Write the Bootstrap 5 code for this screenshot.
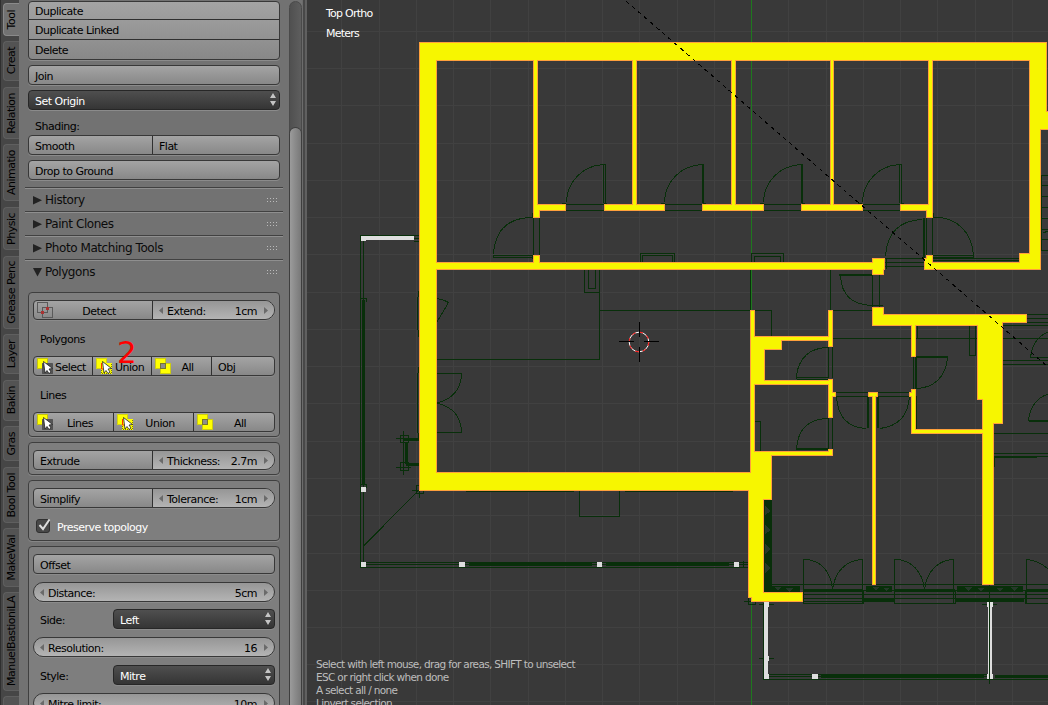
<!DOCTYPE html>
<html lang="en">
<head>
<meta charset="utf-8">
<meta name="viewport" content="width=device-width, initial-scale=1">
<title>Floor plan editor</title>
<link href="https://cdn.jsdelivr.net/npm/bootstrap@5.3.0/dist/css/bootstrap.min.css" rel="stylesheet">
<style>
body{font-family:"DejaVu Sans",sans-serif;font-size:11px;letter-spacing:-.5px;line-height:14px;color:#000;background:#393939}
.app{height:705px;width:1048px}
.tabcol{width:19px;background:#464646;padding:3px 0 0 2px;border-left:1px solid #2f2f2f;flex:none}
.tab{width:17px;border:1px solid #5f5f5f;border-right:0;border-radius:4px 0 0 4px;background:#535353;writing-mode:vertical-rl;flex:none}
.tab span{transform:rotate(180deg);white-space:nowrap;line-height:16px}
.tab.on{background:#727272;border-color:#8a8a8a}
.panel{width:270px;background:#727272;padding:1px 9px 0 9px;flex:none}
.edge{width:5px;background:linear-gradient(90deg,#6c6c6c 0 1px,#484848 1px 3px,#606060 3px);flex:none}
.scroller{width:13px;background:#727272;padding-top:1px;flex:none}
.track{height:760px;border:1px solid #4a4a4a;border-radius:7px;background:linear-gradient(90deg,#505050,#5e5e5e);padding-top:126px}
.thumb{height:640px;border-radius:6px;background:linear-gradient(90deg,#9b9b9b,#787878);box-shadow:0 0 0 1px #3e3e3e}
.ctl{height:20px;border:1px solid #383838;border-radius:4px;background:linear-gradient(#a4a4a4,#888);box-shadow:0 1px 0 #8b8b8b;overflow:hidden;flex:none}
.ctl>div{padding:4px 6px 0;position:relative;white-space:nowrap}
.ctl>div+div{border-left:1px solid #303030}
.stack{height:59px;flex-direction:column}
.stack>div{height:20px;flex:none}
.stack>div:first-child{height:17px;padding-top:3px}
.stack>div+div{border-left:0;border-top:1px solid #303030}
.drop{background:linear-gradient(#4f4f4f,#353535);color:#fff;border-color:#272727}
.drop svg{margin-top:-2px}
.num{background:linear-gradient(#969696,#b4b4b4)}
.num svg{margin-top:2px}
.num svg:last-child{margin-left:7px}
.endnum{border-radius:4px 10px 10px 4px}
.pill{border-radius:10px}
.lab{height:20px;padding:5px 7px 0;flex:none}
.head{height:24px;border-top:1px solid #414141;box-shadow:inset 0 1px 0 #8f8f8f;padding:1px 4px 0 8px;margin:0 -3px 0 -3px;font-size:12px;letter-spacing:-.43px;color:#0b0b0b;flex:none}
.head svg:first-child{margin-right:3px}
.group{border:1px solid #3f3f3f;border-radius:4px;background:#7e7e7e;padding:7px 4px 0;box-shadow:0 1px 0 #868686;flex:none}
.chk{width:14px;height:14px;border:1px solid #303030;border-radius:3px;background:#484848}
.ico{padding:0 3px!important}
.ico span{padding-top:4px}
.view{position:relative;width:741px;overflow:hidden;flex:none}
.hud{position:absolute;color:#fff;letter-spacing:-.75px}
.tips{color:#bdbdbd;line-height:13px;white-space:pre;font-size:10.5px;letter-spacing:-.65px}
.note{position:absolute;left:117px;top:334px;font-size:31px;line-height:36px;color:#f00;letter-spacing:0}
svg{display:block;flex:none}
</style>
<script src="https://cdn.jsdelivr.net/npm/bootstrap@5.3.0/dist/js/bootstrap.bundle.min.js"></script>
</head>
<body class="overflow-hidden">
<svg width="0" height="0" class="position-absolute"><defs>
<g id="i-all" shape-rendering="crispEdges"><path d="M0 0H11V5H16V16H5V11H0z" fill="#ff0"/><path d="M.5 .5H10.500V10.500H.5zM5.500 5.500H15.500V15.500H5.500z" fill="none" stroke="#9a9a20" stroke-opacity=".5"/><path d="M5.500 5.500H10.500V10.500H5.500z" fill="#8d8d8d" stroke="#77772a"/></g>
<g id="cur"><path d="M6.500 3.500L15.500 10.500L12 11L14 14L12 15.500L10 12.500L8 15z" fill="#fff" stroke="#222" stroke-width=".8"/></g>
<g id="i-sel"><path d="M5.500 5.500H15.500V15.500H5.500z" fill="#555" stroke="#333" stroke-dasharray="1 1"/><path d="M0 0H11V5H5V11H0z" fill="#ff0"/><path d="M.5 .5H10.500V5M.5 .5V10.500H5" fill="none" stroke="#85851c" stroke-opacity=".5"/><use href="#cur"/></g>
<g id="i-uni"><path d="M0 0H11V5H16V16H5V11H0z" fill="#ff0"/><path d="M.5 .5H10.500V5M.5 .5V10.500H5" fill="none" stroke="#b4b41c" stroke-opacity=".6"/><path d="M5.500 5v6h4" fill="none" stroke="#f30"/><path d="M15.500 6v9.500H5.500V11" fill="none" stroke="#77770c" stroke-dasharray="1 1"/><use href="#cur"/></g>
<g id="i-det" fill="none" shape-rendering="crispEdges"><path d="M.5 .5H10.500V10.500H.5zM5.500 5.500H15.500V15.500H5.500z" stroke="#5a5a5a"/><path d="M9 5h3v3h-3zM4 9h3v3h-3z" fill="#a33"/></g>
<path id="la" d="M4 0V7L0 3.500z" fill="#6a6a6a"/><path id="ra" d="M0 0V7L4 3.500z" fill="#6a6a6a"/>
<path id="ud" d="M3 0L6 5H0zM3 13L6 8H0z" fill="#c4c4c4"/>
<path id="grip" d="M0 1h1m2 0h1m2 0h1m2 0h1M0 4h1m2 0h1m2 0h1m2 0h1" stroke="#bbb" transform="translate(0,.5)"/>
<path id="walls" d="M420 43H436V490H420zM420 43H1046V60H420zM1030 43H1046V129H1030zM1030 112H1060V129H1030zM1030 112H1040V269H1030zM925 263H1040V269H925zM1020 254H1040V269H1020zM927 256H932V269H927zM925 259H932V269H925zM534 50H537V217H534zM534 205H539V217H534zM633 50H636V210H633zM732 50H735V210H732zM831 50H833V210H831zM929 50H932V217H929zM927 205H932V217H927zM534 205H565V210H534zM605 205H664V210H605zM703 205H763V210H703zM802 205H862V210H802zM901 205H932V210H901zM430 263H880V269H430zM873 259H884V269H873zM873 259H883V274H873zM534 256H539V265H534zM420 473H760V490H420zM751 311H754V480H751zM751 337H831V340H751zM751 337H781V349H751zM751 337H764V384H751zM751 381H830V384H751zM829 311H832V346H829zM829 380H832V417H829zM829 393H835V396H829zM751 452H832V455H751zM829 450H832V455H829zM751 452H771V499H751zM749 475H763V597H749zM752 593H802V601H752zM752 580H763V601H752zM873 308H883V325H873zM873 315H1002V325H873zM990 315H1026V322H990zM978 315H1002V399H978zM983 315H1002V423H983zM983 400H993V584H983zM912 320H915V350H912zM912 349H915V356H912zM912 390H915V433H912zM912 430H985V433H912zM910 393H915V396H910zM873 393H875V584H873zM869 393H877V396H869z"/>
</defs></svg>
<div class="app d-flex position-relative">
<nav class="tabcol d-flex flex-column overflow-hidden">
<div class="tab on d-flex align-items-center justify-content-center" style="height:33px;margin-bottom:5px"><span>Tool</span></div>
<div class="tab d-flex align-items-center justify-content-center" style="height:40px;margin-bottom:6px"><span>Creat</span></div>
<div class="tab d-flex align-items-center justify-content-center" style="height:52px;margin-bottom:5px"><span>Relation</span></div>
<div class="tab d-flex align-items-center justify-content-center" style="height:57px;margin-bottom:6px"><span>Animatio</span></div>
<div class="tab d-flex align-items-center justify-content-center" style="height:43px;margin-bottom:6px"><span>Physic</span></div>
<div class="tab d-flex align-items-center justify-content-center" style="height:73px;margin-bottom:5px"><span>Grease Penc</span></div>
<div class="tab d-flex align-items-center justify-content-center" style="height:40px;margin-bottom:6px"><span>Layer</span></div>
<div class="tab d-flex align-items-center justify-content-center" style="height:41px;margin-bottom:5px"><span>Bakin</span></div>
<div class="tab d-flex align-items-center justify-content-center" style="height:35px;margin-bottom:6px"><span>Gras</span></div>
<div class="tab d-flex align-items-center justify-content-center" style="height:56px;margin-bottom:5px"><span>Bool Tool</span></div>
<div class="tab d-flex align-items-center justify-content-center" style="height:59px;margin-bottom:5px"><span>MakeWal</span></div>
<div class="tab d-flex align-items-center justify-content-center" style="height:99px;margin-bottom:5px"><span>ManuelBastioniLA</span></div>
<div class="tab" style="height:40px"></div>
</nav>
<main class="panel d-flex flex-column overflow-hidden">
<div class="ctl stack d-flex"><div>Duplicate</div><div>Duplicate Linked</div><div>Delete</div></div>
<div class="ctl" style="margin-top:5px"><div>Join</div></div>
<div class="ctl drop" style="margin-top:5px"><div class="d-flex justify-content-between" style="padding-right:3px"><span>Set Origin</span><svg width="6" height="13"><use href="#ud"/></svg></div></div>
<div class="lab" style="margin-top:5px">Shading:</div>
<div class="ctl d-flex"><div style="width:123px">Smooth</div><div>Flat</div></div>
<div class="ctl" style="margin-top:5px"><div>Drop to Ground</div></div>
<div class="head d-flex align-items-center" style="margin-top:7px"><svg width="9" height="10"><path d="M0 1V9.500L9 5.200z" fill="#222"/></svg><span class="flex-grow-1">History</span><svg width="12" height="6"><use href="#grip"/></svg></div>
<div class="head d-flex align-items-center"><svg width="9" height="10"><path d="M0 1V9.500L9 5.200z" fill="#222"/></svg><span class="flex-grow-1">Paint Clones</span><svg width="12" height="6"><use href="#grip"/></svg></div>
<div class="head d-flex align-items-center"><svg width="9" height="10"><path d="M0 1V9.500L9 5.200z" fill="#222"/></svg><span class="flex-grow-1">Photo Matching Tools</span><svg width="12" height="6"><use href="#grip"/></svg></div>
<div class="head d-flex align-items-center"><svg width="9" height="10"><path d="M0 1H9L4.500 9.500z" fill="#222"/></svg><span class="flex-grow-1">Polygons</span><svg width="12" height="6"><use href="#grip"/></svg></div>
<section class="group" style="height:145px;margin-top:9px">
<div class="ctl endnum d-flex"><div class="ico d-flex" style="width:118px"><svg width="16" height="18"><use href="#i-det" y="1"/></svg><span class="flex-grow-1 text-center pe-1">Detect</span></div><div class="num flex-grow-1 d-flex"><svg width="8" height="8"><use href="#la"/></svg><span class="flex-grow-1">Extend:</span><span>1cm</span><svg width="4" height="8"><use href="#ra"/></svg></div></div>
<div class="lab" style="margin-top:8px">Polygons</div>
<div class="ctl d-flex" style="margin-top:8px"><div class="ico d-flex" style="width:58px"><svg width="17" height="18"><use href="#i-sel" y="1"/></svg><span style="padding-left:1px">Select</span></div><div class="ico d-flex" style="width:59px"><svg width="17" height="18"><use href="#i-uni" y="1"/></svg><span style="padding-left:2px">Union</span></div><div class="ico d-flex" style="width:60px"><svg width="16" height="18"><use href="#i-all" y="1"/></svg><span class="flex-grow-1 text-center pe-1">All</span></div><div>Obj</div></div>
<div class="lab" style="margin-top:8px">Lines</div>
<div class="ctl d-flex" style="margin-top:8px"><div class="ico d-flex" style="width:79px"><svg width="17" height="18"><use href="#i-sel" y="1"/></svg><span class="flex-grow-1 text-center pe-1">Lines</span></div><div class="ico d-flex" style="width:80px"><svg width="17" height="18"><use href="#i-uni" y="1"/></svg><span class="flex-grow-1 text-center pe-1">Union</span></div><div class="ico d-flex flex-grow-1"><svg width="16" height="18"><use href="#i-all" y="1"/></svg><span class="flex-grow-1 text-center pe-1">All</span></div></div>
</section>
<section class="group" style="height:33px;margin-top:5px">
<div class="ctl endnum d-flex"><div style="width:118px">Extrude</div><div class="num flex-grow-1 d-flex"><svg width="8" height="8"><use href="#la"/></svg><span class="flex-grow-1">Thickness:</span><span>2.7m</span><svg width="4" height="8"><use href="#ra"/></svg></div></div>
</section>
<section class="group" style="height:61px;margin-top:5px">
<div class="ctl endnum d-flex"><div style="width:118px">Simplify</div><div class="num flex-grow-1 d-flex"><svg width="8" height="8"><use href="#la"/></svg><span class="flex-grow-1">Tolerance:</span><span>1cm</span><svg width="4" height="8"><use href="#ra"/></svg></div></div>
<div class="d-flex text-white" style="margin:11px 0 0 3px"><span class="chk"><svg width="14" height="12" overflow="visible"><path d="M2.500 5L6 9L12.500 -.5" fill="none" stroke="#ddd" stroke-width="2"/></svg></span><span style="margin:2px 0 0 7px">Preserve topology</span></div>
</section>
<section class="group" style="height:220px;margin-top:5px">
<div class="ctl"><div>Offset</div></div>
<div class="ctl num pill" style="margin-top:8px"><div class="d-flex"><svg width="8" height="8"><use href="#la"/></svg><span class="flex-grow-1">Distance:</span><span>5cm</span><svg width="4" height="8"><use href="#ra"/></svg></div></div>
<div class="d-flex" style="margin-top:7px"><div class="lab" style="width:80px">Side:</div><div class="ctl drop flex-grow-1"><div class="d-flex justify-content-between" style="padding-right:3px"><span>Left</span><svg width="6" height="13"><use href="#ud"/></svg></div></div></div>
<div class="ctl num pill" style="margin-top:8px"><div class="d-flex"><svg width="8" height="8"><use href="#la"/></svg><span class="flex-grow-1">Resolution:</span><span>16</span><svg width="4" height="8"><use href="#ra"/></svg></div></div>
<div class="d-flex" style="margin-top:8px"><div class="lab" style="width:80px">Style:</div><div class="ctl drop flex-grow-1"><div class="d-flex justify-content-between" style="padding-right:3px"><span>Mitre</span><svg width="6" height="13"><use href="#ud"/></svg></div></div></div>
<div class="ctl num pill" style="margin-top:8px"><div class="d-flex"><svg width="8" height="8"><use href="#la"/></svg><span class="flex-grow-1">Mitre limit:</span><span>10m</span><svg width="4" height="8"><use href="#ra"/></svg></div></div>
</section>
</main>
<div class="scroller overflow-hidden"><div class="track"><div class="thumb"></div></div></div>
<div class="edge"></div>
<div class="view">
<svg width="741" height="705" viewBox="307 0 741 705" shape-rendering="crispEdges" fill="none">
<!-- grid -->
<path stroke="#414141" d="M341.500 0V705M379.500 0V705M416.500 0V705M453.500 0V705M490.500 0V705M528.500 0V705M565.500 0V705M602.500 0V705M639.500 0V705M677.500 0V705M714.500 0V705M788.500 0V705M826.500 0V705M863.500 0V705M900.500 0V705M937.500 0V705M975.500 0V705M1012.500 0V705M307 31.500H1048M307 68.500H1048M307 105.500H1048M307 143.500H1048M307 180.500H1048M307 217.500H1048M307 254.500H1048M307 292.500H1048M307 329.500H1048M307 366.500H1048M307 403.500H1048M307 441.500H1048M307 478.500H1048M307 515.500H1048M307 553.500H1048M307 590.500H1048M307 627.500H1048M307 664.500H1048M307 701.500H1048"/>
<path d="M751.500 0V705" stroke="#1e781e"/>
<g stroke="#082f0a">
<!-- terrace on the left -->
<path d="M419 235.500H360.500V567.500H749M363.500 240V562M366 562.500H749M366 564.500H749M414 238.500H419M414 241.500H419M363.500 546L418 491"/>
<path d="M363.500 300V484" stroke-width="3"/><path d="M469 564.500H592M606 564.500H729" stroke-width="3"/><path d="M361 298.500h5v3M361 484.500h5v3M743.500 561v7"/>
<path d="M579.500 491V516.500H619.500V491M466 491.500H574M625 491.500H733"/>
<!-- west doors and stair marks -->
<path d="M418.500 291V297M417.500 297V330M418.500 330V337M418.500 367V373M417.500 373V433M418.500 433V438M437 298.500Q443 299 448.500 302.500L437 322M437 359.500H599.500V270M437 373.500H461.500Q461 397 437 403Q461 409 461.500 432.500H437"/>
<path d="M403.500 431V475M396 438.500H411M396 467.500H411M400.500 435.500h8v7h-8zM400.500 462.500h8v8h-8zM412 490.500h10M419.500 486v12M416.500 485.500h7v8h-7z"/><path d="M404 439.500H419M406 442V464M406 464.500H419" stroke-width="3"/>
<!-- fixtures -->
<path d="M584.500 270V292.500H599.500M588.500 270V288.500H595.500V270M640.500 262V253.500H674.500V262M642.500 262V255.500H672.500V262M751.500 262V253.500H783.500V262M754.500 262V256.500H780.500V262M599 310.500H751M750.500 270V310M754 310.500H771.500V336M830.500 270V310M833 310.500H872M833 338.500H978M754 421.500H760.500V452"/>
<!-- upper room doors -->
<path d="M566 204.500H604M566 210.500H604M603.500 203V164.500H605.500V203M562 203.500H566M604 203.500H607M566.500 202A39 38 0 0 1 603 164.500"/>
<path d="M665 204.500H703M665 210.500H703M702.500 164V203M703.500 164V203M661 203.500H665M703 203.500H706M664.500 202A39 38 0 0 1 702 164.500M764 204.500H802M764 210.500H802M801.500 164V203M802.500 164V203M760 203.500H764M802 203.500H805M763.500 202A39 38 0 0 1 801 164.500M863 204.500H900M863 210.500H900M899.500 203V164.500H901.500V203M858 203.500H862M901 203.500H904M862.500 202A39 38 0 0 1 899 164.500"/>
<path d="M533.500 218V255M539.500 218V255M532.500 213V218M532 257.500H493.500V255.500H532V259M493.500 254Q496 218 532 217.500"/>
<path d="M926.500 218V255M932.500 218V255M933 217.500C956 216 972 232 973.500 255.500H933M933 257.500H973.500V254M885.500 256Q888 221 922 219.500M923.500 218V258M924.500 218V258M885 258.500H924M885 262.500H924M885 266.500H924M886.500 258V269M933 258.500H1019M933 260.500H1019M933.500 213V218"/>
<!-- hall doors -->
<path d="M839 274.500H872M839 275.500H872M840.500 276Q842 304 871 305.500M872.500 275V307M879.500 275V307M870 305.500H883"/>
<path d="M828.500 347V378M832.500 347V378M796.500 379V375Q801 348 828 347.500M796 377.500H828M797 379.500H828M828.500 418V449M832.500 418V449M796.500 448Q799 419 828 418.500M796 448.500H828M796 449.500H828"/>
<path d="M836 392.500H868M836 396.500H868M878 392.500H909M878 396.500H909M836.500 396Q838 427 866 428.500M867.500 397V428M868.500 397V428M877.500 397V428M878.500 397V428M880 428.500Q908 425 909.500 396"/>
<path d="M913.500 357V389M915.500 357V389M916.500 357V389M916 356.500H947.500M916 357.500H947.500C946 377 934 388 916 388.500M969.500 326V355.500H976M975.500 326V355M917.500 326V338M916.500 396V430"/>
<!-- right side -->
<path d="M1041.500 175V250.500H1048M1042 175.500H1048M1042 185.500H1048M1042 196.500H1048M1042 207.500H1048M1042 218.500H1048M1042 229.500H1048M1042 239.500H1048M1043 233L1048 231M1027 314.500H1048M1027 318.500H1048M1027 322.500H1048M1003 325.500H1048M1003 338.500H1048M1003 360.500H1048M1003 364.500H1048M1048 332Q1033 338 1030.500 357.500H1048M1048 394Q1031 400 1028.500 420.500H1048M1029 421.500H1048M994 433.500H1048M994 453.500H1048M994 457.500H1037M994 456.500H1048M994.500 456V467"/>
<!-- south windows -->
<path d="M766 584.500H1048M803 590.500H1048M803 594.500H1048M803 598.500H1048M803 601.500H863M803 603.500H863M894 603.500H955M1025 603.500H1048M803.500 559V604M862.500 559V604M894.500 559V604M953.500 559V604M1026.500 559V604M863.500 590V604M955.500 590V604M1025.500 590V604"/>
<path d="M803.500 559.500C820 559 832 572 832.500 591C834 572 846 560 862.500 559.500M894.500 559.500C911 559 923 572 924.500 590C926 572 938 560 953.500 559.500M1026.500 559.500Q1038 560 1048 569"/>
<path d="M803 590.500H863M894 590.500H955M1026 590.500H1048M864 600.500H894M956 600.500H1024" stroke-width="3"/>
<!-- lower balcony -->
<path d="M763.500 603V679.500H1048M769 674.500H988M769 676.500H988M989.500 585V684M759 604.500H774M759 658.500H774M982 604.500H997M744 601.500H751M748.500 597v7h7v-6"/>
<path d="M821 676.500H984M995 676.500H1048" stroke-width="3"/>
</g>
<path d="M764 500H772V592H764zM771 586H800V592H771zM866 586H892V592H866zM957 586H1023V592H957z" fill="#082f0a"/>
<path d="M765 506l6 5-6 4zM765 525l6 5-6 4zM765 544l6 5-6 5zM765 563l6 5-6 5zM775 587h6l-3 4zM786 588h7l-4 4zM872 587h7l-3 4zM883 588h6l-3 3zM964 587h8l-4 4zM977 588h7l-3 3zM996 588h7l-3 3zM1010 587h8l-4 4z" fill="#26382a"/>
<!-- posts and railings -->
<path d="M361 236H414V240H366V241H361zM361 487h5v5h-5zM361 562h5v5h-5zM459 562h6v5h-6zM597 562h5v5h-5zM734 562h5v5h-5zM764 602H769V607H768V656H769V661H768V674H769V679H764zM812 674h6v5h-6zM987 602H989V679H987V674H988V607H987zM990 602H993V607H992V674H993V679H990z" fill="#dedede"/>
<!-- walls: outline first, then the solid body over it -->
<use href="#walls" stroke="#ffa03c" stroke-width="2"/>
<use href="#walls" fill="#f7f600"/>
<path d="M626 1L1048 367" stroke="#000" stroke-dasharray="4 4"/>
<!-- 3D cursor -->
<circle cx="639" cy="342" r="9.800" stroke="#fff" shape-rendering="auto"/><circle cx="639" cy="342" r="9.800" stroke="#f00" stroke-dasharray="3.850 3.850" shape-rendering="auto"/>
<path d="M619 341.500H634M644 341.500H659M639.500 322V337M639.500 347V362" stroke="#000"/>
</svg>
<div class="hud" style="left:19px;top:4px;line-height:20px">Top Ortho<br>Meters</div>
<div class="hud tips" style="left:9px;top:658px">Select with left mouse, drag for areas, SHIFT to unselect
ESC or right click when done
A select all / none
I invert selection</div>
</div>
<div class="note">2</div>
</div>
</body>
</html>
